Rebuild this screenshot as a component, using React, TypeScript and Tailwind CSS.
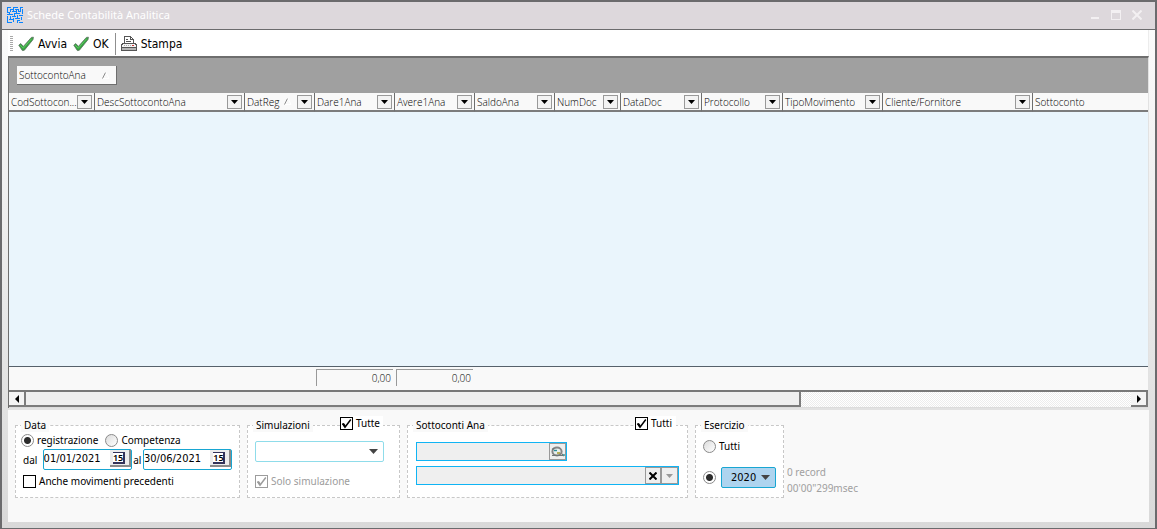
import React, { useState } from "react";

const columns = [
  { label: "CodSottocon...", width: "w-[86px]" },
  { label: "DescSottocontoAna", width: "w-[150px]" },
  { label: "DatReg", width: "w-[70px]", sorted: true },
  { label: "Dare1Ana", width: "w-[80px]" },
  { label: "Avere1Ana", width: "w-[80px]" },
  { label: "SaldoAna", width: "w-[80px]" },
  { label: "NumDoc", width: "w-[66px]" },
  { label: "DataDoc", width: "w-[81px]" },
  { label: "Protocollo", width: "w-[81px]" },
  { label: "TipoMovimento", width: "w-[100px]" },
  { label: "Cliente/Fornitore", width: "w-[150px]" },
  { label: "Sottoconto", width: "", last: true },
];

function Logo() {
  return (
    <svg width="16" height="16" viewBox="0 0 16 16" fill="none" stroke="#0a84ff" shapeRendering="crispEdges" aria-hidden="true">
      <path d="M0 .5h4M6 .5h5M13 .5h3M.5 0v6M3.5 2v3M0 5.5h2M3 2.5h4M6.5 0v5M9.5 2v4M8 2.5h4M11.5 2v2M13.5 0v5M15.5 2v5M5 4.5h4M11 4.5h3M0 7.5h6M2.5 5v3M7 6.5h6M7.5 6v4M10.5 8v3M12 8.5h4M.5 9v6M3.5 9v4M5 9.5h4M2 12.5h5M6.5 11v4M8 11.5h5M14.5 10v3M10 13.5h3M10.5 13v3M0 15.5h5M12 15.5h4" />
    </svg>
  );
}

function GreenCheck() {
  return (
    <svg width="16" height="16" viewBox="0 0 16 16" aria-hidden="true">
      <path d="M.8 9.2 2.8 7.6 5.4 10.4 13.4 1.4 15.4 1.2 15 3.6 6.4 14.2 4.4 14.6Z" fill="#35a340" stroke="#58705c" strokeWidth=".8" />
      <path d="M2.2 9.2 5.3 12.2 13.6 2.8" fill="none" stroke="#5ccb60" strokeWidth="1" />
    </svg>
  );
}

function Printer() {
  return (
    <svg width="16" height="16" viewBox="0 0 16 16" shapeRendering="crispEdges" aria-hidden="true">
      <path d="M3.5 8V.5h6l3 3V8" fill="#fff" stroke="#555" />
      <path d="M9.5 .5v3h3M5 3.5h2M5 5.5h5" fill="none" stroke="#555" />
      <path d="M1.5 7.5h13l1 2v5H.5v-5Z" fill="#f4f4f4" stroke="#555" />
      <path d="M1 12h14v2H1Z" fill="#b4b4b4" />
      <path d="M0 11.5h16M0 14.5h16" stroke="#555" />
      <path d="M11 9.5h2" stroke="#c33" />
      <path d="M3 9.5h7" stroke="#aaa" strokeDasharray="1 1" />
    </svg>
  );
}

function Magnifier() {
  return (
    <svg width="14" height="12" viewBox="0 0 14 12" aria-hidden="true">
      <ellipse cx="6" cy="5.5" rx="4.6" ry="4" fill="#e8eeee" stroke="#858585" strokeWidth="2" />
      <path d="M1 3.5 3 2M1 9.500h12M11 8l2 2" stroke="#6e7676" strokeWidth="1.200" />
      <path d="M3 4.500h3" stroke="#2a8f99" strokeWidth="1.400" />
      <path d="M6 7h3" stroke="#a89b28" strokeWidth="1.500" />
      <path d="M12 9h2" stroke="#3aa0a8" strokeWidth="1.500" />
    </svg>
  );
}

function Triangle({ className = "" }: { className?: string }) {
  return (
    <svg width="9" height="5" viewBox="0 0 9 5" className={className} fill="currentColor" aria-hidden="true">
      <path d="M0 0h9L4.500 5Z" />
    </svg>
  );
}

function SortMark() {
  return (
    <svg width="8" height="7" viewBox="0 0 8 7" fill="none" aria-hidden="true">
      <path d="M.5 6.500 3.500 .5" stroke="#8c8c8c" />
      <path d="M4 .5 7 6.500H1" stroke="#fff" />
    </svg>
  );
}

function Radio(props: { name: string; label: string; hideLabel?: boolean; defaultChecked?: boolean }) {
  return (
    <label className="flex items-center gap-[3px]">
      <input
        type="radio"
        name={props.name}
        aria-label={props.label}
        defaultChecked={props.defaultChecked}
        className="m-0 size-[13px] shrink-0 appearance-none rounded-full border border-[#8a8a8a] bg-linear-to-br from-[#dcdcdc] to-white checked:bg-[radial-gradient(circle,#2c2c2c_0,#2c2c2c_3px,#ffffff_4px)]"
      />
      {!props.hideLabel && <span>{props.label}</span>}
    </label>
  );
}

function Check(props: { label: string; defaultChecked?: boolean; disabled?: boolean }) {
  const [on, setOn] = useState(!!props.defaultChecked);
  return (
    <label className={props.disabled ? "flex items-center gap-[3px] text-[#9c9c9c]" : "flex items-center gap-[3px]"}>
      <span className="grid size-[13px] shrink-0">
        <input
          type="checkbox"
          checked={on}
          disabled={props.disabled}
          onChange={(e) => setOn(e.target.checked)}
          className="col-start-1 row-start-1 m-0 size-[13px] appearance-none border border-black bg-white disabled:border-[#9c9c9c]"
        />
        {on && (
          <svg viewBox="0 0 13 13" className="pointer-events-none col-start-1 row-start-1 size-[13px]" fill="none" stroke="currentColor" aria-hidden="true">
            <path d="M2.500 6.500 5 10.200 10.800 2.500" strokeWidth="1.500" />
            <path d="M3 6.500 5 9.200" strokeWidth="2" />
          </svg>
        )}
      </span>
      <span>{props.label}</span>
    </label>
  );
}

function DateBox({ label, value }: { label: string; value: string }) {
  return (
    <div className="flex h-[21px] w-[89px] items-start rounded-[2px] border border-[#18a6d2] bg-white">
      <input
        type="text"
        aria-label={label}
        defaultValue={value}
        className="h-[17px] min-w-0 flex-1 bg-transparent font-['DejaVu_Sans_Condensed',sans-serif] text-[11px] outline-none"
      />
      <button
        type="button"
        aria-label="Calendario"
        className="flex h-[17px] w-[21px] items-center justify-center border-r-2 border-b-2 border-[#8a8a8a] bg-[#ececec]"
      >
        <span className="flex h-3 w-3 items-center justify-center border-t border-r-2 border-b-2 border-[#33335a] bg-white text-[9px] leading-none font-semibold">15</span>
      </button>
    </div>
  );
}

function Group({ title, className, children }: { title: string; className: string; children: React.ReactNode }) {
  return (
    <fieldset className={"relative h-20 shrink-0 border border-dashed border-[#c8c8c8] bg-white " + className}>
      <legend className="bg-[#f9f9f9] px-[3px] leading-[14px]">{title}</legend>
      {children}
    </fieldset>
  );
}

export default function App() {
  return (
    <div className="flex h-screen min-h-[420px] flex-col border-t-2 border-r-2 border-b border-l-2 border-[#6b6b6d] bg-[#d9d9d9] font-['Noto_Sans',sans-serif] text-[10px] leading-[14px] text-black">
      <header className="flex h-7 shrink-0 items-center border-b border-[#6b6b6d] bg-[#ddd8dc] pr-[13px] pb-[2px] pl-[5px] text-white">
        <Logo />
        <h1 className="ml-1 flex-1 text-[11px] font-normal">Schede Contabilità Analitica</h1>
        <div className="flex items-center gap-[11px] text-[#f3f0f2]">
          <button type="button" aria-label="Riduci a icona">
            <svg width="10" height="10" viewBox="0 0 10 10" className="block" aria-hidden="true"><path d="M1 7h8v2H1Z" fill="currentColor" /></svg>
          </button>
          <button type="button" aria-label="Ingrandisci">
            <svg width="10" height="10" viewBox="0 0 10 10" className="block" aria-hidden="true"><path d="M0 0h10v10H0ZM1 3v6h8V3Z" fill="currentColor" fillRule="evenodd" /></svg>
          </button>
          <button type="button" aria-label="Chiudi">
            <svg width="10" height="10" viewBox="0 0 10 10" className="block" stroke="currentColor" strokeWidth="2" aria-hidden="true"><path d="M.5 .5 9.500 9.500M9.500 .5 .5 9.500" /></svg>
          </button>
        </div>
      </header>

      <div className="flex min-h-0 flex-1 flex-col bg-linear-to-b from-[#fbfbfb] to-[#d9d9d9] px-[6px] pb-[6px]">
        <div className="flex h-[26px] shrink-0 items-center border-r border-[#ececec] bg-white pt-px pl-[2px] font-['DejaVu_Sans_Condensed',sans-serif] text-[12px]">
          <span className="mr-[5px] h-4 w-[3px] bg-[repeating-linear-gradient(to_bottom,#a8a8a8_0,#a8a8a8_1px,#ffffff_1px,#ffffff_2px)]" />
          <button type="button" className="flex items-center gap-1"><GreenCheck />Avvia</button>
          <button type="button" className="ml-[6px] flex items-center gap-1"><GreenCheck />OK</button>
          <span className="mr-[5px] ml-[6px] h-[22px] w-px bg-[#8f8f8f]" />
          <button type="button" className="flex items-center gap-1"><Printer />Stampa</button>
        </div>

        <main className="flex min-h-0 flex-1 flex-col border-t-2 border-r border-l border-[#6e6e6e] border-r-[#e2e2e2] bg-[#f9f9f9]">
          <div className="flex h-[35px] shrink-0 items-center bg-[#a0a0a0] pl-2 font-['Open_Sans',sans-serif] font-light">
            <button type="button" className="flex h-[19px] w-[100px] items-center justify-between border-r border-b border-[#6e6e6e] bg-[#f9f9f9] pr-[6px] pl-[2px]">
              SottocontoAna
              <SortMark />
            </button>
          </div>

          <div className="min-h-0 flex-1">
            <table className="h-full w-full table-fixed border-separate border-spacing-0 font-['Open_Sans',sans-serif] font-light">
              <thead>
                <tr className="h-[19px]">
                  {columns.map((c) => (
                    <th
                      key={c.label}
                      scope="col"
                      className={(c.last ? "border-r-0 " : "border-r ") + "border-b-2 border-b-[#7c7c7c] border-r-[#6e6e6e] bg-[#f9f9f9] p-0 text-left font-light " + c.width}
                    >
                      <div className="flex h-[17px] items-center pr-[2px] pl-[2px]">
                        <span className="min-w-0 flex-1 whitespace-nowrap">
                          {c.label}
                        </span>
                        {c.sorted && <span className="mr-[5px]"><SortMark /></span>}
                        {!c.last && (
                          <button type="button" aria-label={"Filtra " + c.label} className="flex h-[14px] w-[15px] shrink-0 items-center justify-center border border-[#999] bg-[#f3f3f3]">
                            <Triangle className="h-1 w-[7px]" />
                          </button>
                        )}
                      </div>
                    </th>
                  ))}
                </tr>
              </thead>
              <tbody>
                <tr>
                  <td colSpan={columns.length} className="bg-[#eaf5fc] p-0" />
                </tr>
              </tbody>
              <tfoot>
                <tr className="h-6">
                  {columns.map((c) => (
                    <td key={c.label} className="border-t border-[#56616b] bg-[#f9f9f9] p-0 pl-px align-top">
                      {(c.label === "Dare1Ana" || c.label === "Avere1Ana") && (
                        <div className="mt-[2px] h-[17px] w-[77px] border-t border-l border-[#999] pr-[2px] text-right leading-[16px]">0,00</div>
                      )}
                    </td>
                  ))}
                </tr>
              </tfoot>
            </table>
          </div>

          <div className="flex h-[18px] shrink-0 border-t-2 border-b border-t-[#787878] border-b-[#dcdcdc] bg-[repeating-conic-gradient(#ececec_0_25%,#ffffff_0_50%)] bg-size-[2px_2px]">
            <button type="button" aria-label="Scorri a sinistra" className="flex w-[17px] shrink-0 items-center justify-center border-r-2 border-b-2 border-[#7c7c7c] bg-[#f4f4f4]">
              <svg width="4" height="8" viewBox="0 0 4 8" aria-hidden="true"><path d="M4 0v8L0 4Z" /></svg>
            </button>
            <div className="w-[68%] border-r-2 border-b-2 border-[#7c7c7c] bg-[#efefef]" />
            <button type="button" aria-label="Scorri a destra" className="ml-auto flex w-[17px] shrink-0 items-center justify-center border-r-2 border-b-2 border-[#7c7c7c] bg-[#f4f4f4]">
              <svg width="4" height="8" viewBox="0 0 4 8" aria-hidden="true"><path d="M0 0v8L4 4Z" /></svg>
            </button>
          </div>
        </main>

        <form onSubmit={(e) => e.preventDefault()} className="flex h-[114px] shrink-0 items-start gap-[7px] border-t-2 border-[#e2e2e2] bg-[#f9f9f9] pt-2 pl-[7px]">
          <Group title="Data" className="w-[225px] pr-[7px] pl-[5px]">
            <div className="flex h-4 items-center gap-[7px]">
              <Radio name="data" label="registrazione" defaultChecked />
              <Radio name="data" label="Competenza" />
            </div>
            <div className="mt-px flex items-center justify-between">
              <span className="w-5 pl-[2px]">dal</span>
              <DateBox label="dal" value="01/01/2021" />
              <span>al</span>
              <DateBox label="al" value="30/06/2021" />
            </div>
            <div className="mt-1 pl-[2px]"><Check label="Anche movimenti precedenti" /></div>
          </Group>

          <Group title="Simulazioni" className="w-[153px] pr-[15px] pl-[5px]">
            <div className="absolute -top-4 right-4 bg-white pr-[3px]"><Check label="Tutte" defaultChecked /></div>
            <div className="mt-[9px] ml-[2px] grid items-center">
              <select aria-label="Simulazioni" className="col-start-1 row-start-1 h-[21px] w-full appearance-none rounded-[2px] border border-[#8fdcea] bg-white" />
              <Triangle className="pointer-events-none col-start-1 row-start-1 mr-[6px] justify-self-end text-[#444]" />
            </div>
            <div className="mt-3 pl-[2px]"><Check label="Solo simulazione" defaultChecked disabled /></div>
          </Group>

          <Group title="Sottoconti Ana" className="w-[281px] pr-2 pl-[5px]">
            <div className="absolute -top-4 right-[11px] bg-white pr-1"><Check label="Tutti" defaultChecked /></div>
            <div className="mt-[10px] ml-[3px] flex h-[19px] w-[151px] border border-[#10b4f4] bg-[#efefef]">
              <input type="text" aria-label="Codice sottoconto" className="min-w-0 flex-1 outline-none" />
              <button type="button" aria-label="Cerca" className="flex w-[17px] items-center justify-center border border-[#999]"><Magnifier /></button>
            </div>
            <div className="mt-[5px] ml-[3px] flex h-[19px] border border-[#10b4f4] bg-[#efefef]">
              <input type="text" aria-label="Descrizione sottoconto" className="min-w-0 flex-1 outline-none" />
              <button type="button" aria-label="Cancella" className="flex w-4 items-center justify-center border border-[#999]">
                <svg width="8" height="8" viewBox="0 0 8 8" stroke="#000" strokeWidth="2" aria-hidden="true"><path d="M.5 .5 7.500 7.500M7.500 .5 .5 7.500" /></svg>
              </button>
              <button type="button" aria-label="Apri elenco" className="flex w-[17px] items-center justify-center border border-[#999] text-[#999]">
                <Triangle className="h-1 w-[7px]" />
              </button>
            </div>
          </Group>

          <Group title="Esercizio" className="w-[89px] pr-[7px] pl-[5px]">
            <div className="mt-[7px] ml-[2px]"><Radio name="esercizio" label="Tutti" defaultChecked={false} /></div>
            <div className="mt-[14px] ml-[2px] flex items-center justify-between">
              <Radio name="esercizio" label="Anno" hideLabel defaultChecked />
              <div className="grid w-[55px] items-center">
                <select aria-label="Anno esercizio" className="col-start-1 row-start-1 h-[21px] w-full appearance-none rounded-[2px] border border-[#18a6d2] bg-[#aed4ef] pl-[9px] font-['DejaVu_Sans_Condensed',sans-serif] text-[11px]">
                  <option>2020</option>
                </select>
                <Triangle className="pointer-events-none col-start-1 row-start-1 mr-[6px] justify-self-end text-[#444]" />
              </div>
            </div>
          </Group>

          <div className="-ml-1 mt-[46px] leading-4 text-[#a0a0a0]">
            <p>0 record</p>
            <p>00'00"299msec</p>
          </div>
        </form>
      </div>
    </div>
  );
}
